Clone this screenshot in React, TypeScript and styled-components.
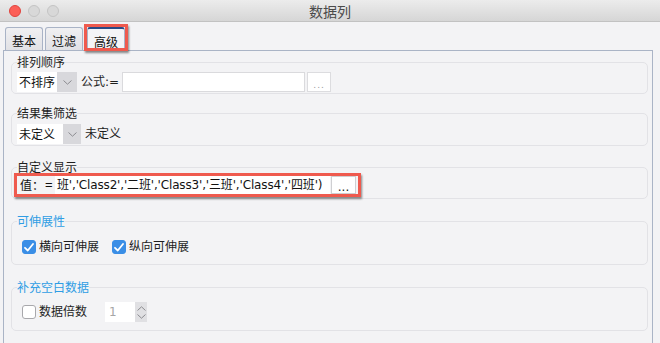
import React from "react";
import styled, { createGlobalStyle } from "styled-components";

const FONT = `"DejaVu Sans", "Noto Sans CJK SC", sans-serif`;
const CJK = `"Noto Sans CJK SC", sans-serif`;

const Global = createGlobalStyle`
  html, body { margin: 0; padding: 0; background: #f3f3f5; }
  body { font-family: ${FONT}; font-size: 12px; color: #222; }
  * { box-sizing: border-box; }
`;

const Window = styled.div`
  width: 660px;
  height: 343px;
  overflow: hidden;
  background: #f3f3f5;
  display: flex;
  flex-direction: column;
`;

const TitleBar = styled.div`
  height: 22px;
  flex: none;
  display: grid;
  grid-template-columns: 1fr auto 1fr;
  align-items: center;
  background: linear-gradient(#ececec, #d6d6d6);
  border-bottom: 1px solid #c2c2c2;
`;

const Lights = styled.div`
  display: flex;
  gap: 7px;
  padding-left: 9px;
`;

const Light = styled.span<{ $c: string; $b: string }>`
  width: 12px;
  height: 12px;
  border-radius: 50%;
  background: ${(p) => p.$c};
  border: 1px solid ${(p) => p.$b};
`;

const Title = styled.div`
  font-family: ${CJK};
  font-size: 14px;
  line-height: 16px;
  color: #4a4a4a;
`;

const Body = styled.div`
  flex: 1;
  display: flex;
  flex-direction: column;
  padding: 5px 7px 0 3px;
`;

const TabRow = styled.div`
  display: flex;
  align-items: flex-end;
  gap: 2px;
  padding-left: 2px;
  height: 23px;
  position: relative;
  z-index: 1;
`;

const Tab = styled.div<{ $active?: boolean }>`
  position: relative;
  height: ${(p) => (p.$active ? 24 : 23)}px;
  margin-bottom: ${(p) => (p.$active ? -1 : 0)}px;
  padding: 3px 6px 0;
  display: flex;
  align-items: center;
  font-family: ${CJK};
  font-size: 12px;
  line-height: 14px;
  color: #111;
  border: 1px solid #a9b3c6;
  border-top: ${(p) => (p.$active ? "2px solid #2b4a85" : "1px solid #a9b3c6")};
  border-bottom: none;
  border-radius: 3px 3px 0 0;
  background: ${(p) =>
    p.$active ? "#f4f4f6" : "linear-gradient(#f0f0f2, #e1e1e5)"};
  ${(p) =>
    p.$active &&
    `
    margin-left: 2px;
    &::after {
      content: "";
      position: absolute;
      top: -5px;
      left: -4px;
      right: -4px;
      bottom: 0px;
      border: 3px solid #ef5a4e;
      box-shadow: 1px 2px 2px rgba(0,0,0,0.45);
      pointer-events: none;
    }
  `}
`;

const Panel = styled.div`
  flex: 1;
  display: flex;
  flex-direction: column;
  border: 1px solid #aab4c6;
  border-bottom: none;
  padding: 4px 4px 0 7px;
`;

const Group = styled.fieldset<{ $mt?: number; $pb?: number }>`
  margin: ${(p) => p.$mt ?? 0}px 0 0 0;
  min-width: 0;
  border: 1px solid #e2e2e6;
  border-radius: 5px;
  padding: 0 6px ${(p) => p.$pb ?? 1}px 5px;
`;

const Legend = styled.legend<{ $blue?: boolean }>`
  padding: 0;
  font-family: ${CJK};
  font-size: 12px;
  line-height: 14px;
  color: ${(p) => (p.$blue ? "#2f9de4" : "#1e1e1e")};
`;

const Row = styled.div<{ $mt?: number; $gap?: number; $pl?: number }>`
  display: flex;
  align-items: center;
  margin-top: ${(p) => p.$mt ?? 0}px;
  gap: ${(p) => p.$gap ?? 4}px;
  padding-left: ${(p) => p.$pl ?? 0}px;
`;

const Select = styled.div<{ $w: number }>`
  display: flex;
  height: 20px;
  width: ${(p) => p.$w}px;
  flex: none;
`;

const SelectText = styled.div`
  flex: 1;
  background: #fff;
  padding-left: 2px;
  font-family: ${CJK};
  font-size: 12px;
  line-height: 20px;
  color: #111;
`;

const SelectArrow = styled.div<{ $w: number }>`
  width: ${(p) => p.$w}px;
  background: #d8d8dc;
  display: flex;
  align-items: center;
  justify-content: center;
`;

const Label = styled.span<{ $ml?: number }>`
  font-family: ${FONT};
  font-size: 12px;
  line-height: 16px;
  color: #1e1e1e;
  white-space: nowrap;
  margin-left: ${(p) => p.$ml ?? 0}px;
`;

const TextField = styled.div<{ $w: number }>`
  width: ${(p) => p.$w}px;
  height: 20px;
  background: #fff;
  border: 1px solid #dadadd;
  flex: none;
`;

const DotsButton = styled.div<{ $dark?: boolean; $w: number; $h: number }>`
  width: ${(p) => p.$w}px;
  height: ${(p) => p.$h}px;
  flex: none;
  background: #fff;
  border: 1px solid ${(p) => (p.$dark ? "#cfcfd2" : "#dcdcdf")};
  display: flex;
  align-items: center;
  justify-content: center;
  font-family: ${FONT};
  font-size: ${(p) => (p.$dark ? 12 : 9)}px;
  line-height: 10px;
  padding-top: ${(p) => (p.$dark ? 4 : 5)}px;
  letter-spacing: ${(p) => (p.$dark ? 0 : 1)}px;
  color: ${(p) => (p.$dark ? "#222" : "#9a9a9a")};
`;

const Highlight = styled.div`
  display: flex;
  align-items: center;
  margin: -1px 0 0 -3px;
  width: 347px;
  height: 24px;
  border: 3px solid #ef5a4e;
  box-shadow: 1px 2px 2px rgba(0, 0, 0, 0.45);
  padding: 0 2px 0 3px;
`;

const ValueLabel = styled.span`
  font-family: ${CJK};
  font-size: 12px;
  line-height: 16px;
  color: #111;
  width: 25px;
  flex: none;
`;

const Equals = styled.span`
  font-family: "Liberation Sans", sans-serif;
  font-size: 13px;
  line-height: 16px;
  color: #111;
  width: 10px;
  flex: none;
`;

const ValueInput = styled.div`
  flex: 1;
  height: 18px;
  background: #fff;
  overflow: hidden;
  white-space: nowrap;
  padding-left: 2px;
  font-family: ${FONT};
  font-size: 12px;
  letter-spacing: -0.15px;
  line-height: 18px;
  color: #111;
  margin-right: 1px;
`;

const Check = styled.span<{ $on?: boolean }>`
  width: 14px;
  height: 14px;
  flex: none;
  border-radius: 3px;
  display: flex;
  align-items: center;
  justify-content: center;
  background: ${(p) => (p.$on ? "#3a8ee6" : "#fff")};
  border: 1px solid ${(p) => (p.$on ? "#3a8ee6" : "#a8a8ac")};
`;

const CheckItem = styled.div<{ $ml?: number }>`
  display: flex;
  align-items: center;
  gap: 3px;
  margin-left: ${(p) => p.$ml ?? 0}px;
`;

const Spinner = styled.div`
  display: flex;
  height: 20px;
  margin-left: 18px;
`;

const SpinInput = styled.div`
  width: 30px;
  background: #fff;
  padding-left: 4px;
  font-family: ${FONT};
  font-size: 12px;
  line-height: 20px;
  color: #a6a6a6;
`;

const SpinArrows = styled.div`
  width: 12px;
  background: #e0e0e3;
  display: flex;
  flex-direction: column;
  align-items: center;
  justify-content: space-around;
  padding: 2px 0;
`;

const Chevron = ({ up }: { up?: boolean }) => (
  <svg width="9" height="5" viewBox="0 0 9 5">
    <path
      d={up ? "M0.5 4.5 L4.5 0.8 L8.5 4.5" : "M0.5 0.5 L4.5 4.2 L8.5 0.5"}
      fill="none"
      stroke="#8c8c90"
      strokeWidth="1"
    />
  </svg>
);

const Tick = () => (
  <svg width="10" height="9" viewBox="0 0 10 9">
    <path
      d="M1 4.8 L3.8 7.5 L9 1"
      fill="none"
      stroke="#fff"
      strokeWidth="1.8"
      strokeLinecap="round"
      strokeLinejoin="round"
    />
  </svg>
);

export default function App() {
  return (
    <>
      <Global />
      <Window>
        <TitleBar>
          <Lights>
            <Light $c="#fc5f57" $b="#e0443e" />
            <Light $c="#d8d8d8" $b="#c4c4c4" />
            <Light $c="#d8d8d8" $b="#c4c4c4" />
          </Lights>
          <Title>数据列</Title>
          <div />
        </TitleBar>
        <Body>
          <TabRow>
            <Tab>基本</Tab>
            <Tab>过滤</Tab>
            <Tab $active>高级</Tab>
          </TabRow>
          <Panel>
            <Group>
              <Legend>排列顺序</Legend>
              <Row $mt={3} $gap={0}>
                <Select $w={60}>
                  <SelectText>不排序</SelectText>
                  <SelectArrow $w={20}>
                    <Chevron />
                  </SelectArrow>
                </Select>
                <Label $ml={4}>公式:=</Label>
                <TextField $w={183} style={{ marginLeft: 3 }} />
                <DotsButton $w={24} $h={20} style={{ marginLeft: 2 }}>
                  ...
                </DotsButton>
              </Row>
            </Group>

            <Group $mt={12}>
              <Legend>结果集筛选</Legend>
              <Row $mt={4} $gap={4}>
                <Select $w={64}>
                  <SelectText>未定义</SelectText>
                  <SelectArrow $w={18}>
                    <Chevron />
                  </SelectArrow>
                </Select>
                <Label>未定义</Label>
              </Row>
            </Group>

            <Group $mt={14}>
              <Legend>自定义显示</Legend>
              <Highlight>
                <ValueLabel>值：</ValueLabel>
                <Equals>=</Equals>
                <ValueInput>
                  班','Class2','二班','Class3','三班','Class4','四班')
                </ValueInput>
                <DotsButton $dark $w={25} $h={18}>
                  ...
                </DotsButton>
              </Highlight>
            </Group>

            <Group $mt={15} $pb={9}>
              <Legend $blue>可伸展性</Legend>
              <Row $mt={11} $gap={0} $pl={5}>
                <CheckItem>
                  <Check $on>
                    <Tick />
                  </Check>
                  <Label>横向可伸展</Label>
                </CheckItem>
                <CheckItem $ml={13}>
                  <Check $on>
                    <Tick />
                  </Check>
                  <Label>纵向可伸展</Label>
                </CheckItem>
              </Row>
            </Group>

            <Group $mt={15} $pb={8}>
              <Legend $blue>补充空白数据</Legend>
              <Row $mt={8} $gap={0} $pl={5}>
                <CheckItem>
                  <Check />
                  <Label>数据倍数</Label>
                </CheckItem>
                <Spinner>
                  <SpinInput>1</SpinInput>
                  <SpinArrows>
                    <Chevron up />
                    <Chevron />
                  </SpinArrows>
                </Spinner>
              </Row>
            </Group>
          </Panel>
        </Body>
      </Window>
    </>
  );
}
